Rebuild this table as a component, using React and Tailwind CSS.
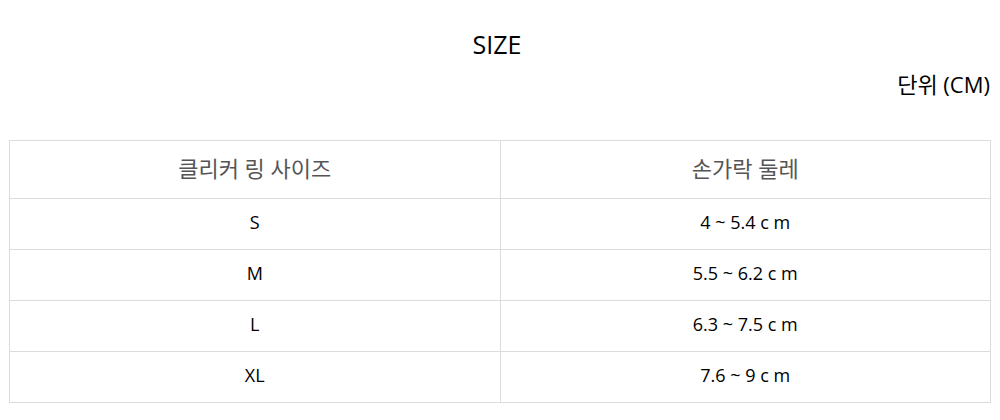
const rows = [
  ['S', '4 ~ 5.4 c m'],
  ['M', '5.5 ~ 6.2 c m'],
  ['L', '6.3 ~ 7.5 c m'],
  ['XL', '7.6 ~ 9 c m'],
]

export default function App() {
  return (
    <div
      className="w-[1000px] h-[420px] bg-white text-black px-[9px] pt-[27px]"
      style={{ fontFamily: '"Open Sans", "Noto Sans", "Noto Sans CJK KR", sans-serif' }}
    >
      <h2 className="text-center text-[25px] leading-[34px] pr-[6px]">SIZE</h2>
      <div className="text-right text-[22px] leading-[30px] mt-[8px] pr-[1px]">단위 (CM)</div>
      <table className="mt-[41px] w-full border-collapse border border-[#dcdcdc] table-fixed">
        <thead>
          <tr className="h-[58px]">
            <th className="border border-[#dcdcdc] font-normal text-[22px] text-[#555] pb-[2px]">클리커 링 사이즈</th>
            <th className="border border-[#dcdcdc] font-normal text-[22px] text-[#555] pb-[2px]">손가락 둘레</th>
          </tr>
        </thead>
        <tbody>
          {rows.map(([size, range]) => (
            <tr key={size} className="h-[51px]">
              <td className="border border-[#dcdcdc] text-center text-[18px] pb-[3px]">{size}</td>
              <td className="border border-[#dcdcdc] text-center text-[18px] pb-[3px]">{range}</td>
            </tr>
          ))}
        </tbody>
      </table>
    </div>
  )
}
